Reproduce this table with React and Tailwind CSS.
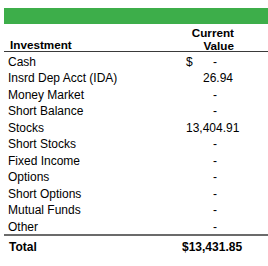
import React from "react";

const rows = [
  { name: "Cash", value: "-", dollar: true },
  { name: "Insrd Dep Acct (IDA)", value: "26.94" },
  { name: "Money Market", value: "-" },
  { name: "Short Balance", value: "-" },
  { name: "Stocks", value: "13,404.91" },
  { name: "Short Stocks", value: "-" },
  { name: "Fixed Income", value: "-" },
  { name: "Options", value: "-" },
  { name: "Short Options", value: "-" },
  { name: "Mutual Funds", value: "-" },
  { name: "Other", value: "-" },
];

export default function App() {
  return (
    <div
      className="w-[268px] h-[266px] bg-white pl-[4px] pt-[8px] text-black text-[12px]"
      style={{ fontFamily: '"Liberation Sans", Arial, sans-serif' }}
    >
      {/* Green header bar */}
      <div className="h-[16px] bg-[#3dae4a]" />

      {/* Column headings */}
      <div className="h-[28px] pt-[1.5px] flex font-bold text-[11.7px] leading-[13.5px] border-b-[1.5px] border-[#3a3a3a]">
        <div className="flex-1 flex items-end pl-[6px]">Investment</div>
        <div className="w-[86px] pr-[34px] text-right">
          <div>Current</div>
          <div>Value</div>
        </div>
      </div>

      {/* Holdings */}
      {rows.map((row) => (
        <div key={row.name} className="h-[16.55px] pt-[3.5px] leading-[13px] flex">
          <div className="flex-1 pl-[4px]">{row.name}</div>
          <div className="w-[86px] flex justify-between pl-[4px] pr-[35px]">
            <span>{row.dollar ? "$" : ""}</span>
            <span className={row.value === "-" ? "mr-[16px]" : ""}>{row.value}</span>
          </div>
        </div>
      ))}

      {/* Total */}
      <div className="h-[22px] flex items-center font-bold border-t-2 border-[#6b6b6b] pt-[2px]">
        <div className="flex-1 pl-[5px]">Total</div>
        <div className="w-[86px] pr-[34px] text-right">$13,431.85</div>
      </div>
    </div>
  );
}
